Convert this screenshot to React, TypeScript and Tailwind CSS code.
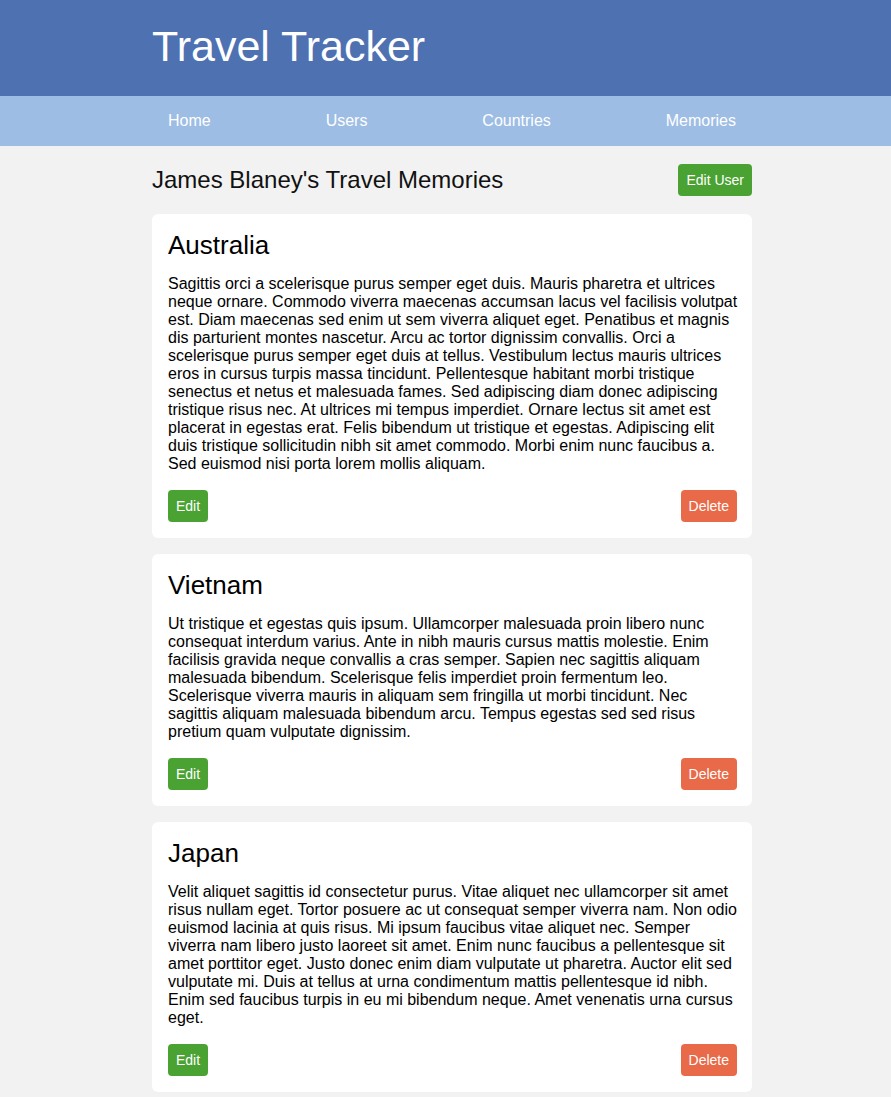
import React from 'react';

interface Memory {
  country: string;
  lines: string[];
}

// lines kept as in the original layout so wrapping matches
const memories: Memory[] = [
  {
    country: 'Australia',
    lines: [
      'Sagittis orci a scelerisque purus semper eget duis. Mauris pharetra et ultrices',
      'neque ornare. Commodo viverra maecenas accumsan lacus vel facilisis volutpat',
      'est. Diam maecenas sed enim ut sem viverra aliquet eget. Penatibus et magnis',
      'dis parturient montes nascetur. Arcu ac tortor dignissim convallis. Orci a',
      'scelerisque purus semper eget duis at tellus. Vestibulum lectus mauris ultrices',
      'eros in cursus turpis massa tincidunt. Pellentesque habitant morbi tristique',
      'senectus et netus et malesuada fames. Sed adipiscing diam donec adipiscing',
      'tristique risus nec. At ultrices mi tempus imperdiet. Ornare lectus sit amet est',
      'placerat in egestas erat. Felis bibendum ut tristique et egestas. Adipiscing elit',
      'duis tristique sollicitudin nibh sit amet commodo. Morbi enim nunc faucibus a.',
      'Sed euismod nisi porta lorem mollis aliquam.',
    ],
  },
  {
    country: 'Vietnam',
    lines: [
      'Ut tristique et egestas quis ipsum. Ullamcorper malesuada proin libero nunc',
      'consequat interdum varius. Ante in nibh mauris cursus mattis molestie. Enim',
      'facilisis gravida neque convallis a cras semper. Sapien nec sagittis aliquam',
      'malesuada bibendum. Scelerisque felis imperdiet proin fermentum leo.',
      'Scelerisque viverra mauris in aliquam sem fringilla ut morbi tincidunt. Nec',
      'sagittis aliquam malesuada bibendum arcu. Tempus egestas sed sed risus',
      'pretium quam vulputate dignissim.',
    ],
  },
  {
    country: 'Japan',
    lines: [
      'Velit aliquet sagittis id consectetur purus. Vitae aliquet nec ullamcorper sit amet',
      'risus nullam eget. Tortor posuere ac ut consequat semper viverra nam. Non odio',
      'euismod lacinia at quis risus. Mi ipsum faucibus vitae aliquet nec. Semper',
      'viverra nam libero justo laoreet sit amet. Enim nunc faucibus a pellentesque sit',
      'amet porttitor eget. Justo donec enim diam vulputate ut pharetra. Auctor elit sed',
      'vulputate mi. Duis at tellus at urna condimentum mattis pellentesque id nibh.',
      'Enim sed faucibus turpis in eu mi bibendum neque. Amet venenatis urna cursus',
      'eget.',
    ],
  },
];

const navItems = ['Home', 'Users', 'Countries', 'Memories'];

const MemoryCard: React.FC<Memory> = ({ country, lines }) => (
  <div className="bg-white rounded-md pt-4 pb-4 pl-4 pr-[15px]">
    <h2 className="text-[26px] leading-[30px] text-black">{country}</h2>
    <p className="mt-[15px] text-[16px] leading-[18px] text-black whitespace-nowrap">
      {lines.map((line, i) => (
        <React.Fragment key={i}>
          {line}
          {i < lines.length - 1 && <br />}
        </React.Fragment>
      ))}
    </p>
    <div className="flex items-center justify-between mt-[17px]">
      <button className="h-8 px-2 rounded bg-[#4aa233] text-white text-[14px]">Edit</button>
      <button className="h-8 px-2 rounded bg-[#e96a48] text-white text-[14px]">Delete</button>
    </div>
  </div>
);

export default function App() {
  return (
    <div
      className="min-h-screen bg-[#f2f2f2]"
      style={{ fontFamily: '"Liberation Sans", Arial, sans-serif' }}
    >
      <header className="bg-[#4e71b2] h-[96px]">
        <div className="w-[600px] ml-[152px] h-full flex items-center">
          <h1 className="text-white text-[43px] leading-[50px] font-normal pb-[5px]">Travel Tracker</h1>
        </div>
      </header>

      {/* nav */}
      <nav className="bg-[#9dbde4] h-[50px]">
        <div className="w-[600px] ml-[152px] h-full flex items-center justify-between px-4">
          {navItems.map((item) => (
            <a key={item} className="text-white text-[16px]">
              {item}
            </a>
          ))}
        </div>
      </nav>

      <main className="w-[600px] ml-[152px] pt-[18px] pb-2">
        <div className="flex items-center justify-between mb-[18px]">
          <h3 className="text-[24px] leading-8 text-[#111]">James Blaney's Travel Memories</h3>
          <button className="h-8 px-2 rounded bg-[#4aa233] text-white text-[14px]">Edit User</button>
        </div>
        <div className="flex flex-col gap-4">
          {memories.map((m) => (
            <MemoryCard key={m.country} {...m} />
          ))}
        </div>
      </main>
    </div>
  );
}
